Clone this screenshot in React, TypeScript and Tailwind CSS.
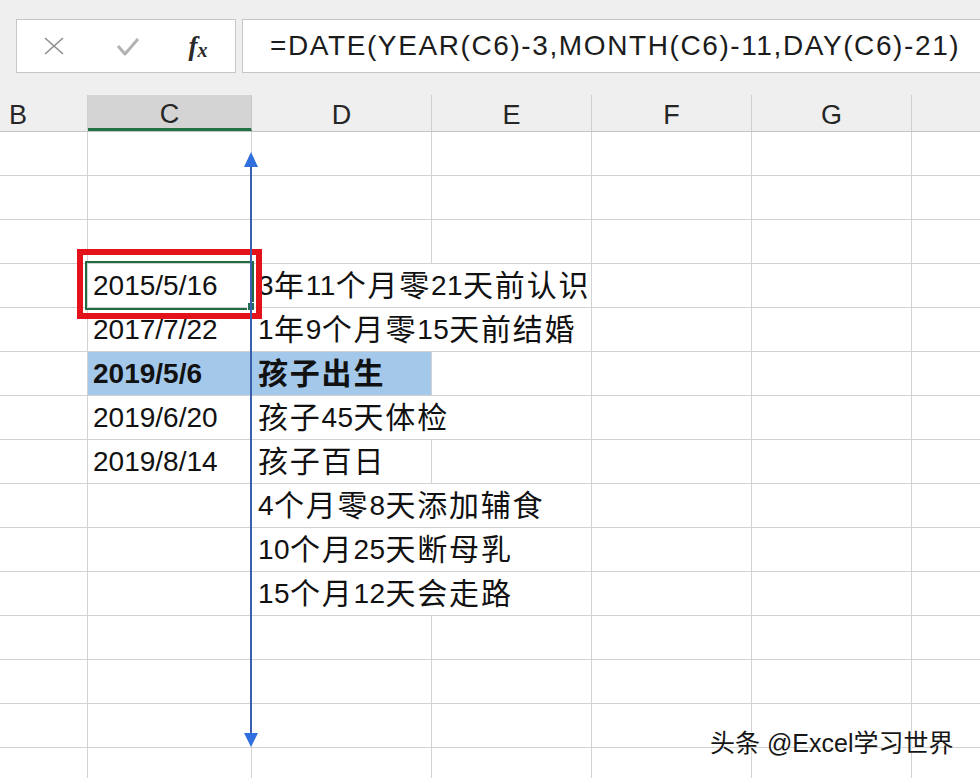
import React from "react";

type Row = { c?: string; d?: string; bold?: boolean; hl?: boolean; ov?: boolean };

const rows: Row[] = [
  {},
  {},
  {},
  { c: "2015/5/16", d: "3年11个月零21天前认识", ov: true },
  { c: "2017/7/22", d: "1年9个月零15天前结婚", ov: true },
  { c: "2019/5/6", d: "孩子出生", bold: true, hl: true },
  { c: "2019/6/20", d: "孩子45天体检", ov: true },
  { c: "2019/8/14", d: "孩子百日" },
  { d: "4个月零8天添加辅食", ov: true },
  { d: "10个月25天断母乳", ov: true },
  { d: "15个月12天会走路", ov: true },
  {},
  {},
  {},
  {},
];

function Mixed({ text }: { text: string }) {
  const parts = text.match(/[0-9]+|[^0-9]+/g) ?? [];
  return (
    <>
      {parts.map((p, i) =>
        /[0-9]/.test(p[0]) ? (
          <span key={i} className="tracking-[0.4px]">{p}</span>
        ) : (
          <span key={i} className="text-[30px] tracking-[1.8px]">
            {p}
          </span>
        )
      )}
    </>
  );
}

const line = "border-[#d2d2d2]";

export default function App() {
  return (
    <div className="relative w-[980px] h-[778px] overflow-hidden bg-white font-['Liberation_Sans','Noto_Sans_CJK_SC',sans-serif] text-[#111]">
      {/* formula toolbar */}
      <div className="h-[95px] bg-[#efefef] flex items-start pt-[19px] pl-[16px] gap-[6px]">
        <div className="w-[220px] h-[54px] shrink-0 bg-white border border-[#c6c6c6] flex items-center">
          <div className="w-[74px] flex justify-center">
            <svg width="20" height="18" viewBox="0 0 20 18">
              <path d="M1 1 L19 17 M19 1 L1 17" stroke="#8e8e8e" strokeWidth="1.6" fill="none" />
            </svg>
          </div>
          <div className="w-[74px] flex justify-center">
            <svg width="24" height="20" viewBox="0 0 24 20">
              <path d="M2 10 L9 18 L22 3" stroke="#b2b2b2" strokeWidth="3" fill="none" strokeLinejoin="round" />
            </svg>
          </div>
          <div className="w-[66px] flex justify-center items-end font-['Liberation_Serif',serif] italic font-bold text-[#2a2a2a] leading-none">
            <span className="text-[27px]">f</span>
            <span className="text-[20px]">x</span>
          </div>
        </div>
        <div className="flex-1 h-[54px] bg-white border border-r-0 border-[#c6c6c6] flex items-center pl-[27px] text-[28px] tracking-[1.6px] text-[#1c1c1c] whitespace-nowrap overflow-hidden">
          =DATE(YEAR(C6)-3,MONTH(C6)-11,DAY(C6)-21)
        </div>
      </div>

      {/* column headers */}
      <div className="h-[37px] bg-[#efefef] flex border-b border-[#c4c4c4] text-[27px] text-[#262626] leading-none">
        <div className="w-[88px] shrink-0 border-r border-[#d0d0d0] flex items-center pl-[9px] pt-[4px]">B</div>
        <div className="w-[164px] shrink-0 bg-[#d4d4d4] border-b-[3px] border-b-[#217346] border-r border-r-[#c8c8c8] flex items-center justify-center pt-[6px]">
          C
        </div>
        <div className="w-[180px] shrink-0 border-r border-[#d0d0d0] flex items-center justify-center pt-[4px]">D</div>
        <div className="w-[160px] shrink-0 border-r border-[#d0d0d0] flex items-center justify-center pt-[4px]">E</div>
        <div className="w-[160px] shrink-0 border-r border-[#d0d0d0] flex items-center justify-center pt-[4px]">F</div>
        <div className="w-[160px] shrink-0 border-r border-[#d0d0d0] flex items-center justify-center pt-[4px]">G</div>
        <div className="flex-1" />
      </div>

      {/* grid */}
      <div className="flex flex-col text-[28px] leading-none">
        {rows.map((r, i) => (
          <div key={i} className={`h-[44px] shrink-0 flex border-b ${line}`}>
            <div className={`w-[88px] shrink-0 border-r ${line}`} />
            <div
              className={`w-[164px] shrink-0 border-r ${line} flex items-center pl-[5px] whitespace-nowrap ${
                r.hl ? "bg-[#a4c8ea]" : ""
              } ${r.bold ? "font-bold" : ""}`}
            >
              {r.c}
            </div>
            <div
              className={`w-[180px] shrink-0 border-r flex items-center pl-[6px] whitespace-nowrap overflow-visible ${
                r.ov ? "border-r-transparent" : "border-r-[#d2d2d2]"
              } ${r.hl ? "bg-[#a4c8ea]" : ""} ${r.bold ? "font-bold" : ""}`}
            >
              {r.d ? <Mixed text={r.d} /> : null}
            </div>
            <div className={`w-[160px] shrink-0 border-r ${line}`} />
            <div className={`w-[160px] shrink-0 border-r ${line}`} />
            <div className={`w-[160px] shrink-0 border-r ${line}`} />
            <div className="flex-1" />
          </div>
        ))}
      </div>

      {/* selection */}
      <div className="absolute left-[85px] top-[261px] w-[169px] h-[49px] border-[2.5px] border-[#1f6e43]" />
      <div className="absolute left-[247px] top-[302px] w-[8px] h-[9px] bg-[#1f6e56] border border-white" />
      {/* red highlight box */}
      <div className="absolute left-[77px] top-[249px] w-[185px] h-[70px] border-[6px] border-[#e3121b]" />

      {/* double arrow */}
      <svg className="absolute left-[242px] top-[150px]" width="18" height="600" viewBox="0 0 18 600">
        <line x1="9" y1="16" x2="9" y2="584" stroke="#3a5fae" strokeWidth="2" />
        <polygon points="9,2 2,17 16,17" fill="#2f6fde" />
        <polygon points="2,583 16,583 9,597" fill="#2f6fde" />
      </svg>

      {/* watermark */}
      <div className="absolute left-[710px] top-[728px] text-[25px] leading-[30px] text-[#161616] whitespace-nowrap font-['Liberation_Sans','Noto_Sans_CJK_SC',sans-serif] [text-shadow:1px_-1px_0_#fff]">
        头条 @Excel学习世界
      </div>
    </div>
  );
}
